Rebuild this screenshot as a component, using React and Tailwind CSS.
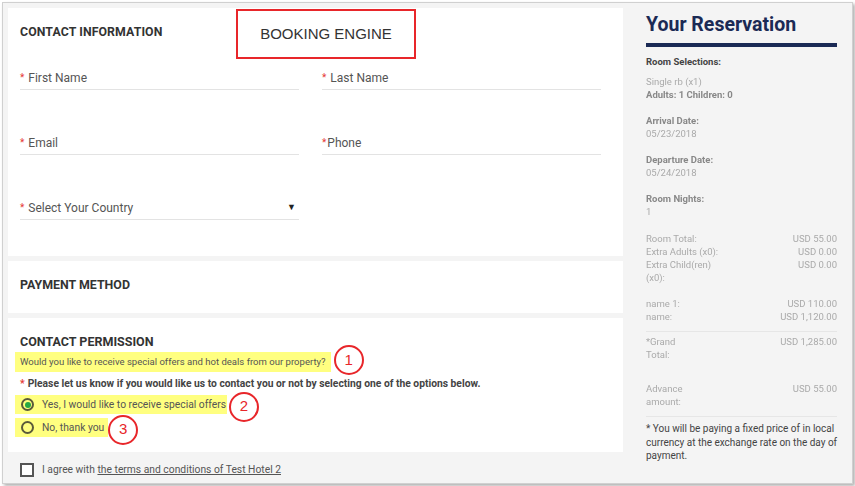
import React from "react";

function Field({ label, tight, arrow }) {
  return (
    <div className="h-[65px]">
      <div className="flex items-center h-[16px] pt-[1px] pb-[3px] box-content border-b border-[#e3e3e3] text-[12px] text-[#555]">
        <span className={"text-[#e53935] text-[10px] relative -top-[1px] " + (tight ? "mr-[1px]" : "mr-[4px]")}>*</span>
        <span className="flex-1">{label}</span>
        {arrow && <span className="text-[9px] text-[#222] mr-[3px]">▼</span>}
      </div>
    </div>
  );
}

function Num({ n }) {
  return (
    <span className="inline-flex items-center justify-center w-[30px] h-[30px] shrink-0 rounded-full border-2 border-[#e8262a] text-[#e8262a] text-[15px] font-['Liberation_Sans',sans-serif]">
      {n}
    </span>
  );
}

function Row({ l, r, l2 }) {
  return (
    <div className="flex justify-between">
      <div>
        <div>{l}</div>
        {l2 && <div>{l2}</div>}
      </div>
      <div className="text-[#aaa]">{r}</div>
    </div>
  );
}

export default function App() {
  return (
    <div className="w-[855px] h-[486px] bg-white font-['Roboto',sans-serif] overflow-hidden">
      <div className="ml-[2px] mt-[2px] w-[851px] h-[482px] border border-[#d0d0d0] bg-[#f4f4f4] shadow-[2px_2px_3px_rgba(0,0,0,0.3)] flex">
        {/* Left column */}
        <div className="w-[620px] pl-[5px] pt-[5px] flex flex-col gap-[5px]">
          {/* Contact info card */}
          <div className="relative bg-white h-[248px] pl-[12px] pr-[22px] pt-[16px]">
            <div className="h-[16px] flex items-center text-[12.3px] font-bold text-[#333] tracking-[0.1px]">CONTACT INFORMATION</div>
            <div className="absolute left-[228px] top-[1px] w-[180px] h-[50px] border-2 border-[#e8262a] flex items-center justify-center text-[15px] text-[#333] font-['Liberation_Sans',sans-serif]">
              BOOKING ENGINE
            </div>
            <div className="mt-[29px] grid grid-cols-2 gap-x-[23px]">
              <Field label="First Name" />
              <Field label="Last Name" />
              <Field label="Email" />
              <Field label="Phone" tight />
              <Field label="Select Your Country" arrow />
            </div>
          </div>
          {/* Payment */}
          <div className="bg-white h-[52px] pl-[12px] pt-[16px]">
            <div className="h-[16px] flex items-center text-[12.4px] font-bold text-[#333]">PAYMENT METHOD</div>
          </div>
          {/* Contact permission */}
          <div className="bg-white h-[134px] pl-[7px] pt-[16px]">
            <div className="h-[16px] pl-[5px] flex items-center text-[12.5px] font-bold text-[#333]">CONTACT PERMISSION</div>
            <div className="mt-[2px] h-[20px] flex items-center">
              <span className="h-[20px] flex items-center bg-[#ffff80] px-[5px] text-[9.55px] text-[#555]">
                Would you like to receive special offers and hot deals from our property?
              </span>
              <span className="ml-[3px] relative -top-[2px]"><Num n="1" /></span>
            </div>
            <div className="mt-[5px] h-[14px] pl-[5px] flex items-center text-[10.3px] font-bold text-[#444]">
              <span className="text-[#e53935] mr-[3px]">*</span>
              Please let us know if you would like us to contact you or not by selecting one of the options below.
            </div>
            <div className="mt-[4px] h-[19px] flex items-center">
              <span className="h-[19px] flex items-center bg-[#ffff80] pl-[6px] pr-[1px] text-[10.3px] text-[#555]">
                <span className="w-[13px] h-[13px] rounded-full border-2 border-[#5a5a3a] flex items-center justify-center mr-[8px]">
                  <span className="w-[6px] h-[6px] rounded-full bg-[#27a844]" />
                </span>
                Yes, I would like to receive special offers
              </span>
              <span className="ml-[2px] relative top-[2px]"><Num n="2" /></span>
            </div>
            <div className="mt-[4px] h-[19px] flex items-center">
              <span className="h-[19px] flex items-center bg-[#ffff80] pl-[6px] pr-[4px] text-[10.3px] text-[#555]">
                <span className="w-[13px] h-[13px] rounded-full border-2 border-[#5a5a3a] mr-[8px]" />
                No, thank you
              </span>
              <span className="ml-[0px] relative top-[2px]"><Num n="3" /></span>
            </div>
          </div>
          {/* Agree row */}
          <div className="pl-[12px] mt-[6px] flex items-center h-[14px]">
            <span className="w-[14px] h-[14px] border-2 border-[#555] bg-white mr-[8px]" />
            <span className="text-[10.3px] text-[#555]">
              I agree with <span className="underline">the terms and conditions of Test Hotel 2</span>
            </span>
          </div>
        </div>

        {/* Right panel */}
        <div className="flex-1 pl-[23px] pr-[5px] pt-[10px] text-[9.5px] leading-[13px]">
          <div className="mr-[10px]">
            <div className="text-[19.5px] leading-[24px] font-bold text-[#1b2a55]">Your Reservation</div>
            <div className="mt-[6px] h-[4px] bg-[#1b2a55]" />
            <div className="mt-[8px] font-bold text-[#444]">Room Selections:</div>
            <div className="blur-[0.7px]">
              <div className="mt-[7px] text-[#aaa]">Single rb (x1)</div>
              <div className="font-bold text-[#888]">Adults: 1 Children: 0</div>
              <div className="mt-[13px] font-bold text-[#888]">Arrival Date:</div>
              <div className="text-[#aaa]">05/23/2018</div>
              <div className="mt-[13px] font-bold text-[#888]">Departure Date:</div>
              <div className="text-[#aaa]">05/24/2018</div>
              <div className="mt-[13px] font-bold text-[#888]">Room Nights:</div>
              <div className="text-[#aaa]">1</div>
              <div className="mt-[14px] text-[#aaa]">
                <Row l="Room Total:" r="USD 55.00" />
                <Row l="Extra Adults (x0):" r="USD 0.00" />
                <Row l="Extra Child(ren)" l2="(x0):" r="USD 0.00" />
              </div>
              <div className="mt-[13px] text-[#aaa]">
                <Row l="name 1:" r="USD 110.00" />
                <Row l="name:" r="USD 1,120.00" />
              </div>
              <div className="mt-[8px] border-t border-[#e6e6e6]" />
              <div className="mt-[3px] text-[#aaa]">
                <Row l="*Grand" l2="Total:" r="USD 1,285.00" />
              </div>
              <div className="mt-[21px] text-[#aaa]">
                <Row l="Advance" l2="amount:" r="USD 55.00" />
              </div>
              <div className="mt-[8px] border-t border-[#e6e6e6]" />
            </div>
          </div>
          <div className="mt-[5px] text-[10px] leading-[13.5px] text-[#444]">
            * You will be paying a fixed price of in local currency at the exchange rate on the day of payment.
          </div>
        </div>
      </div>
    </div>
  );
}
